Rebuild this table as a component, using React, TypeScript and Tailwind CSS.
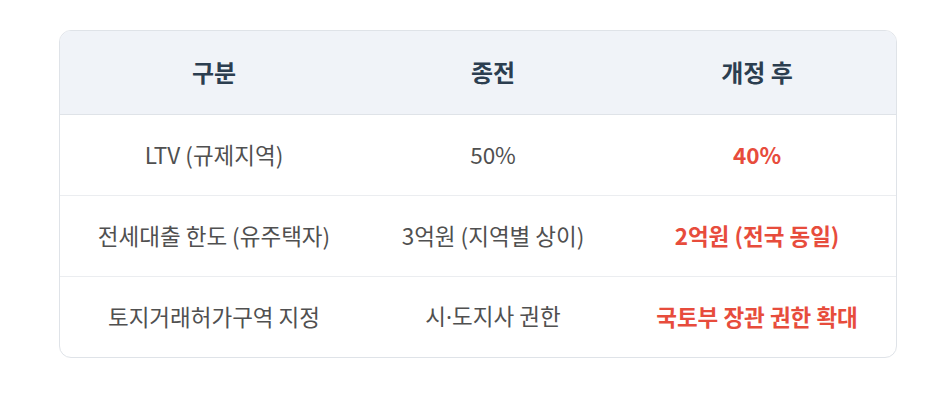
const rows: { label: string; before: React.ReactNode; after: string }[] = [
  { label: 'LTV (규제지역)', before: '50%', after: '40%' },
  { label: '전세대출 한도 (유주택자)', before: '3억원 (지역별 상이)', after: '2억원 (전국 동일)' },
  {
    label: '토지거래허가구역 지정',
    before: (
      <>
        시<span className="font-['Noto_Sans',sans-serif]">·</span>도지사 권한
      </>
    ),
    after: '국토부 장관 권한 확대',
  },
];

export default function App() {
  return (
    <div className="min-h-[402px] bg-white pl-[59px] pr-[50px] pt-[30px] font-['Noto_Sans_CJK_KR',sans-serif]">
      <div className="overflow-hidden rounded-xl border border-[#dfe3e8]">
        <table className="w-full border-collapse table-fixed">
          <colgroup>
            <col className="w-[308px]" />
            <col className="w-[250px]" />
            <col />
          </colgroup>
          <thead>
            <tr className="h-[83px] bg-[#f0f3f8] border-b border-[#dfe3e8]">
              <th className="text-[24px] font-bold text-[#2c3e50]">구분</th>
              <th className="text-[24px] font-bold text-[#2c3e50]">종전</th>
              <th className="text-[24px] font-bold text-[#2c3e50]">개정 후</th>
            </tr>
          </thead>
          <tbody>
            {rows.map((r, i) => (
              <tr key={r.label} className={i < rows.length - 1 ? 'h-[81px] border-b border-[#ebedf0]' : 'h-[81px]'}>
                <td className="text-center text-[22.5px] text-[#505050]">{r.label}</td>
                <td className="text-center text-[22.5px] text-[#505050]">{r.before}</td>
                <td className="text-center text-[22.5px] font-bold text-[#e74c3c]">{r.after}</td>
              </tr>
            ))}
          </tbody>
        </table>
      </div>
    </div>
  );
}
